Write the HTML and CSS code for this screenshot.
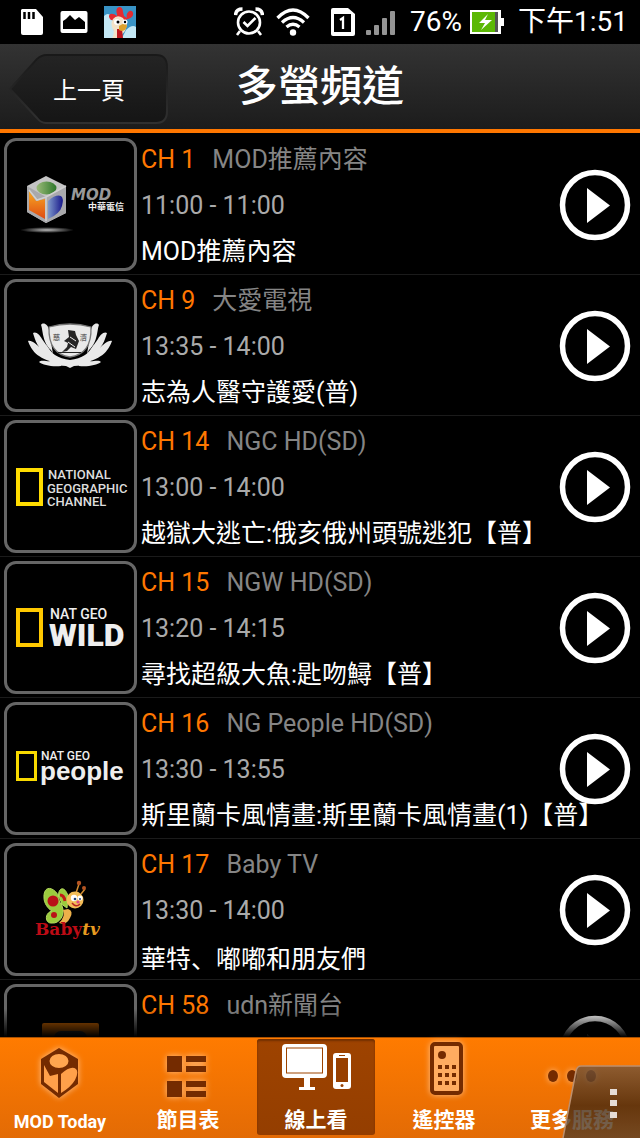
FILE: index.html
```
<!DOCTYPE html>
<html lang="zh-Hant">
<head>
    <meta charset="UTF-8">
    <meta name="viewport" content="width=device-width, initial-scale=1.0">
    <title>多螢頻道</title>
    <link rel="stylesheet" href="styles.css">
</head>
<body>
    <!-- Shared icons -->
    <svg class="defs" aria-hidden="true">
        <symbol id="play" viewBox="0 0 72 72">
            <circle cx="36" cy="36" r="32.5" fill="none" stroke="#fff" stroke-width="5.5"/>
            <path d="M28 19v35l23-17.500z" fill="#fff"/>
        </symbol>
    </svg>

    <!-- Phone status bar -->
    <div class="status-bar">
        <div class="status-left">
            <svg width="24" height="28" viewBox="0 0 24 28"><path d="M2 1h14l7 8v16q0 2-2 2H3q-2 0-2-2V2z" fill="#fff"/><path d="M4.500 4v7M9 4v7M13.500 4v7" stroke="#000" stroke-width="2.500"/></svg>
            <svg width="28" height="24" viewBox="0 0 28 24"><rect x="0.500" y="1" width="27" height="22" rx="2" fill="#fff"/><path d="M3 19V11l3-2 4-4 5 5 4-3 6 5v7z"/></svg>
            <svg width="32" height="32" viewBox="0 0 32 32">
                <rect width="32" height="32" fill="#3993c5"/>
                <path d="M0 10q5-5 8 2l3 20H0zM22 24q6-6 10-3v11H18z" fill="#c4e8f5"/>
                <path d="M13 8C10 0 19-2 19 6l1 4 3 2c-2-6 5-10 6-5 1 4-4 6-6 6l-3 3-13-2C2 9 7 5 13 10z" fill="#e52b30"/>
                <path d="M9 13q4-5 10-1l4 7-2 6-6 7H8q3-5 1-9-3-5 0-10z" fill="#f3e2c8"/>
                <path d="M13 23h5l1 9h-6z" fill="#bd171f"/>
                <path d="M15 20q7-5 8 0-2 7-8 4z" fill="#dda12c"/>
                <circle cx="13" cy="16" r="3" fill="#fff"/><circle cx="21" cy="16" r="2.500" fill="#fff"/>
                <circle cx="14" cy="16" r="1.500"/><circle cx="21" cy="16" r="1.200"/>
            </svg>
        </div>
        <div class="status-right">
            <svg width="30" height="30" viewBox="0 0 30 30" fill="none" stroke="#fff" stroke-width="2.600"><circle cx="15" cy="15.500" r="11"/><path d="M9.500 15l4 4 8-8M6 24l-3 4M24 24l3 4"/><path d="M1.500 8Q2 2 8.500 2M21.500 2Q28 2 28.500 8" stroke-width="3.500"/></svg>
            <svg class="wifi" width="34" height="28" viewBox="0 0 34 28" fill="none" stroke="#fff" stroke-width="3.300"><path d="M1.500 10Q17-6 32.500 10M6 14.500q11-10 22 0M10.500 19q6.500-5.500 13 0"/><circle cx="17" cy="24.500" r="3.200" fill="#fff" stroke="none"/></svg>
            <svg width="26" height="30" viewBox="0 0 26 30"><path d="M3 1h15l7 6v20q0 2-2 2H3q-2 0-2-2V3q0-2 2-2z" fill="#fff"/><path d="M4 7h17v18H4z"/><path d="M10 13l3-2v11" fill="none" stroke="#fff" stroke-width="2.300"/></svg>
            <svg class="signal" width="30" height="28" viewBox="0 0 30 28" fill="#949494"><rect y="22" width="5" height="5" rx="1"/><rect x="8" y="17" width="5" height="10" rx="1"/><rect x="16" y="10" width="5" height="17" rx="1"/><rect x="24" y="3" width="5" height="24" rx="1"/></svg>
            <span class="percent">76%</span>
            <svg width="34" height="24" viewBox="0 0 34 24"><path d="M0 0h31v8h3v8h-3v8H0z" fill="#fff"/><rect x="2" y="2" width="23" height="20" fill="#5cb805"/><rect x="25" y="2" width="3" height="20" fill="#555"/><path d="M18 4L9 13h6l-4 7 11-10h-7z" fill="#fff"/></svg>
            <span class="clock">下午1:51</span>
        </div>
    </div>

    <header>
        <button class="back">
            <svg class="back-shape" viewBox="0 0 160 72" preserveAspectRatio="none" aria-hidden="true">
                <defs>
                    <linearGradient id="backFill" x2="0" y2="1"><stop stop-color="#242424"/><stop offset="1" stop-color="#151515"/></linearGradient>
                    <linearGradient id="backEdge" x2="0" y2="1"><stop stop-color="#191919"/><stop offset="1" stop-color="#303030"/></linearGradient>
                </defs>
                <path d="M1 36L28 6Q33 2 37 2h110q11 0 11 12v44q0 12-11 12H37q-5 0-9-5z" fill="url(#backFill)" stroke="url(#backEdge)" stroke-width="2"/>
            </svg>
            <span>上一頁</span>
        </button>
        <h1>多螢頻道</h1>
    </header>

    <main>
        <ul class="channels">
            <li class="channel">
                <div class="thumb">
                    <svg viewBox="0 0 127 127" role="img" aria-label="MOD">
                        <defs>
                            <linearGradient id="cubeGreen"><stop stop-color="#9bbb78"/><stop offset="1" stop-color="#2d772b"/></linearGradient>
                            <linearGradient id="cubeOrange" x2="0" y2="1"><stop stop-color="#f7a923"/><stop offset="1" stop-color="#df4b12"/></linearGradient>
                            <linearGradient id="cubeBlue"><stop stop-color="#7f9acb"/><stop offset="1" stop-color="#17178b"/></linearGradient>
                            <radialGradient id="cubeShadow"><stop stop-color="#bbb"/><stop offset="1" stop-color="#000"/></radialGradient>
                        </defs>
                        <path d="M39 35l20 10v27L39 82 20 71V45z" fill="#c5c5c5"/>
                        <path d="M20 45l19 11 20-11v27L39 82 20 71z" fill="#a9a9ac"/>
                        <ellipse cx="39.500" cy="47" rx="10" ry="6.500" fill="url(#cubeGreen)"/>
                        <path d="M22 50l7 10 9-2v20L22 69z" fill="url(#cubeOrange)"/>
                        <path d="M41 60q8-7 13-5 3 2 1 10-2 8-14 13z" fill="url(#cubeBlue)"/>
                        <path d="M22 49l8 10 9-3v24M39 56l20-11" fill="none" stroke="#d0d0d0" stroke-width="1.500"/>
                        <ellipse cx="40" cy="89" rx="27" ry="3" fill="url(#cubeShadow)"/>
                        <text class="logo-mod" x="64" y="59">MOD</text>
                        <text class="logo-cht" x="81" y="69">中華電信</text>
                    </svg>
                </div>
                <div class="info">
                    <p class="name"><span class="number">CH 1</span>MOD推薦內容</p>
                    <p class="time">11:00 - 11:00</p>
                    <p class="program">MOD推薦內容</p>
                </div>
                <button class="play" aria-label="播放 CH 1"><svg><use href="#play"/></svg></button>
            </li>

            <li class="channel">
                <div class="thumb">
                    <svg viewBox="0 0 127 127" role="img" aria-label="大愛電視">
                        <defs>
                            <path id="petals" d="M44 68C35 60 36 47 34 43c2-3 7-1 8 5l4 24zM45 75C30 68 28 57 26 51c3-2 7 2 9 6l12 17zM47 80C27 76 23 64 21 59c4-1 9 4 12 7l16 12zM54 84c-9 1-18-1-22-4 2-3 9 0 12-1l12-1z"/>
                        </defs>
                        <g fill="#e9e9e9">
                            <use href="#petals"/>
                            <use href="#petals" transform="translate(126 0) scale(-1 1)"/>
                            <path d="M39 62q6 14 24 16 18-2 24-16l-4 19q-9 3-16 3l-4 2-4-2q-7 0-16-3z"/>
                            <path d="M42 45Q63 39 84 45 85 72 63 75 41 72 42 45z"/>
                        </g>
                        <path d="M42 45Q63 39 84 45 85 72 63 75 41 72 42 45z" fill="none" stroke="#777" stroke-width="1.300"/>
                        <path d="M61 48l7 1 1 4 3 6-3 8-5-2-4 4-5 1 5-5 1-4-4-2 5-4zM51 70h23v1H51z" fill="#252525"/>
                        <path d="M63 55l6 4M61 60l7 5" stroke="#eee"/>
                        <text class="logo-seal" x="46" y="58">慈</text>
                        <text class="logo-seal" x="73" y="58">濟</text>
                    </svg>
                </div>
                <div class="info">
                    <p class="name"><span class="number">CH 9</span>大愛電視</p>
                    <p class="time">13:35 - 14:00</p>
                    <p class="program">志為人醫守護愛(普)</p>
                </div>
                <button class="play" aria-label="播放 CH 9"><svg><use href="#play"/></svg></button>
            </li>

            <li class="channel">
                <div class="thumb">
                    <svg viewBox="0 0 127 127" role="img" aria-label="National Geographic Channel">
                        <rect x="11" y="47" width="23" height="34" fill="none" stroke="#ffdc00" stroke-width="4"/>
                        <text class="logo-ngc" x="41" y="56">NATIONAL</text>
                        <text class="logo-ngc" x="40" y="70">GEOGRAPHIC</text>
                        <text class="logo-ngc" x="40" y="83">CHANNEL</text>
                    </svg>
                </div>
                <div class="info">
                    <p class="name"><span class="number">CH 14</span>NGC HD(SD)</p>
                    <p class="time">13:00 - 14:00</p>
                    <p class="program">越獄大逃亡:俄亥俄州頭號逃犯【普】</p>
                </div>
                <button class="play" aria-label="播放 CH 14"><svg><use href="#play"/></svg></button>
            </li>

            <li class="channel">
                <div class="thumb">
                    <svg viewBox="0 0 127 127" role="img" aria-label="Nat Geo Wild">
                        <rect x="11" y="46" width="23" height="35" fill="none" stroke="#ffc900" stroke-width="4"/>
                        <text class="logo-geo" x="43" y="55">NAT GEO</text>
                        <text class="logo-wild" x="42" y="82">WILD</text>
                    </svg>
                </div>
                <div class="info">
                    <p class="name"><span class="number">CH 15</span>NGW HD(SD)</p>
                    <p class="time">13:20 - 14:15</p>
                    <p class="program">尋找超級大魚:匙吻鱘【普】</p>
                </div>
                <button class="play" aria-label="播放 CH 15"><svg><use href="#play"/></svg></button>
            </li>

            <li class="channel">
                <div class="thumb">
                    <svg viewBox="0 0 127 127" role="img" aria-label="Nat Geo People">
                        <rect x="10.500" y="47.500" width="18" height="27" fill="none" stroke="#f8d900" stroke-width="3"/>
                        <text class="logo-geo small" x="34" y="55">NAT GEO</text>
                        <text class="logo-people" x="33" y="75">people</text>
                    </svg>
                </div>
                <div class="info">
                    <p class="name"><span class="number">CH 16</span>NG People HD(SD)</p>
                    <p class="time">13:30 - 13:55</p>
                    <p class="program">斯里蘭卡風情畫:斯里蘭卡風情畫(1)【普】</p>
                </div>
                <button class="play" aria-label="播放 CH 16"><svg><use href="#play"/></svg></button>
            </li>

            <li class="channel">
                <div class="thumb">
                    <svg viewBox="0 0 127 127" role="img" aria-label="Baby TV">
                        <path d="M53 57C48 43 57 37 61 50l-1 12zM55 60C52 41 36 36 37 52c0 5 4 11 8 13-8 2-7 13 0 12 7 1 14-8 10-17z" fill="#9bcb3d" stroke="#b3d95f"/>
                        <path d="M61 63q6 2 2 9-4 8-11 5 7-7 4-13z" fill="#edb04a"/>
                        <circle cx="46" cy="55" r="5.500" fill="#b91118"/><circle cx="47" cy="69" r="3" fill="#b91118"/>
                        <path d="M53 49q4 0 5 6" fill="none" stroke="#c31b16" stroke-width="3"/>
                        <path d="M69 47l3-9M74 48l4-5" stroke="#d18b2f" stroke-width="1.500"/>
                        <circle cx="72" cy="37" r="2.200" fill="#b45422"/><circle cx="77" cy="42" r="2" fill="#b45422"/>
                        <circle cx="68" cy="54" r="8.500" fill="#f3bd58"/>
                        <circle cx="67" cy="52" r="3.200" fill="#fff"/><circle cx="73" cy="52" r="2.600" fill="#fff"/>
                        <circle cx="68" cy="53" r="1.300" fill="#247"/><circle cx="73" cy="53" r="1" fill="#247"/>
                        <circle cx="71" cy="56" r="1.600" fill="#de4688"/><path d="M65 57q4 5 8 1" fill="none" stroke="#b82222" stroke-width="1.500"/>
                        <text class="logo-baby" x="28" y="89">Baby<tspan class="logo-tv">tv</tspan></text>
                    </svg>
                </div>
                <div class="info">
                    <p class="name"><span class="number">CH 17</span>Baby TV</p>
                    <p class="time">13:30 - 14:00</p>
                    <p class="program">華特<span class="comma" lang="zh-Hans">、</span>嘟嘟和朋友們</p>
                </div>
                <button class="play" aria-label="播放 CH 17"><svg><use href="#play"/></svg></button>
            </li>

            <li class="channel">
                <div class="thumb">
                    <svg viewBox="0 0 127 127" role="img" aria-label="udn">
                        <rect x="35" y="36" width="57" height="55" rx="2" fill="#c86300"/>
                        <rect x="47" y="44" width="33" height="38" rx="7" fill="#333"/>
                    </svg>
                </div>
                <div class="info">
                    <p class="name"><span class="number">CH 58</span>udn新聞台</p>
                </div>
                <button class="play" aria-label="播放 CH 58"><svg><use href="#play"/></svg></button>
            </li>
        </ul>
    </main>

    <!-- Bottom tabs -->
    <nav class="tabs">
        <a href="#" class="tab">
            <svg class="glow" viewBox="0 0 72 60">
                <path d="M35 5l19 11v25L35 55 17 41V16z" fill="#742b00"/>
                <ellipse cx="35" cy="18" rx="9.500" ry="7" fill="#ffa64f"/>
                <path d="M20 22l6 11 8-2v19L20 39zM37 31q10-9 15-5 3 3-1 11-4 7-14 13z" fill="#ffa04a"/>
            </svg>
            <span class="latin">MOD Today</span>
        </a>
        <a href="#" class="tab">
            <svg class="glow" viewBox="0 0 72 60" fill="#742b00">
                <path d="M15 13h15v16H15zM34 13h20v6H34zM34 23h20v6H34zM15 38h15v16H15zM34 38h20v6H34zM34 48h20v6H34z"/>
            </svg>
            <span>節目表</span>
        </a>
        <a href="#" class="tab active">
            <svg viewBox="0 0 72 60">
                <path d="M6 1h37q4 0 4 4v26q0 4-4 4H30v9h5v3H19v-3h5v-9H6q-4 0-4-4V5q0-4 4-4z" fill="#fff"/>
                <rect x="6.500" y="5" width="36" height="25" fill="none" stroke="#9d4400"/>
                <rect x="53" y="10" width="18" height="36" rx="3" fill="#fff"/>
                <path d="M56 15h12v24H56zM59 12h6v1h-6z" fill="#984000"/><circle cx="62" cy="42.500" r="1.500" fill="#984000"/>
            </svg>
            <span>線上看</span>
        </a>
        <a href="#" class="tab">
            <svg class="glow" viewBox="0 0 72 60">
                <rect x="24" y="1" width="29" height="49" rx="3" fill="#ffac60" stroke="#742b00" stroke-width="4"/>
                <circle cx="34" cy="12" r="4" fill="#742b00"/>
                <path d="M30 22h4v4h-4zM37 22h4v4h-4zM44 22h4v4h-4zM30 30h4v4h-4zM37 30h4v4h-4zM44 30h4v4h-4zM30 38h4v4h-4zM37 38h4v4h-4zM44 38h4v4h-4z" fill="#742b00"/>
            </svg>
            <span>遙控器</span>
        </a>
        <a href="#" class="tab">
            <svg class="glow" viewBox="0 0 72 60" fill="#742b00"><ellipse cx="17" cy="33" rx="5" ry="6"/><ellipse cx="36" cy="33" rx="5" ry="6"/><ellipse cx="55" cy="33" rx="5" ry="6"/></svg>
            <span>更多服務</span>
        </a>
        <button class="overflow" aria-label="選單">
            <svg viewBox="0 0 78 73">
                <defs><linearGradient id="menuFill" x2="0" y2="1"><stop stop-color="#74553b"/><stop offset=".55" stop-color="#45280f"/><stop offset="1" stop-color="#5a4027"/></linearGradient></defs>
                <path d="M1 73L14 6q1-5 5-5h59v72z" fill="url(#menuFill)" fill-opacity=".8"/>
                <path d="M1 73L14 6q1-5 5-5h59" fill="none" stroke="#bd8f6d" stroke-width="1.500"/>
                <path d="M48 24h7v6h-7zM48 35h7v6h-7zM48 47h7v6h-7z" fill="#e5dcd6"/>
            </svg>
        </button>
    </nav>
</body>
</html>
```
FILE: styles.css
```
/* Reset some default styles */
* {
    box-sizing: border-box;
}

body, h1, p, ul, button {
    margin: 0;
    padding: 0;
}

button {
    border: none;
    background: none;
    color: inherit;
    font-family: inherit;
    cursor: pointer;
}

svg {
    display: block;
    flex-shrink: 0;
}

body {
    display: flex;
    flex-direction: column;
    height: 100vh;
    overflow: hidden;
    background: #000;
    color: #fff;
    font-family: Roboto, "Noto Sans CJK TC", sans-serif;
}

.defs {
    position: absolute;
    width: 0;
    height: 0;
}

/* Status bar */
.status-bar {
    display: flex;
    justify-content: space-between;
    align-items: center;
    height: 44px;
    padding: 0 12px 0 20px;
    font-size: 28px;
    line-height: 44px;
}

.status-left, .status-right {
    display: flex;
    align-items: center;
}

.status-left {
    gap: 16px;
}

.wifi {
    margin: 0 20px 0 12px;
}

.signal {
    margin: 0 14px 0 10px;
}

.percent {
    margin-right: 8px;
}

.clock {
    margin-left: 14px;
}

/* Header */
header {
    display: grid;
    grid-template-columns: 1fr auto 1fr;
    align-items: center;
    flex-shrink: 0;
    height: 89px;
    padding-top: 4px;
    background: linear-gradient(#333, #1c1c1c);
    border-bottom: 4px solid #ff7700;
}

.back {
    display: grid;
    align-items: center;
    width: 160px;
    margin-left: 9px;
    font-size: 24px;
}

.back > * {
    grid-area: 1 / 1;
}

.back-shape {
    width: 100%;
    height: 72px;
}

h1 {
    font-size: 42px;
    font-weight: 500;
    line-height: 76px;
    padding-bottom: 4px;
}

/* Channel list */
main {
    position: relative;
    flex: 1;
    min-height: 0;
    padding-top: 1px;
    overflow: hidden;
}

main::after {
    content: "";
    position: absolute;
    left: 0;
    right: 0;
    bottom: 0;
    height: 28px;
    background: linear-gradient(transparent, #000);
}

.channels {
    list-style: none;
}

.channel {
    display: flex;
    align-items: flex-start;
    height: 141px;
    padding: 4px 9px 0 4px;
    border-bottom: 1px solid #1b1b1b;
}

.thumb {
    flex-shrink: 0;
    width: 133px;
    height: 133px;
    border: 3px solid #666;
    border-radius: 12px;
}

.info {
    flex: 1;
    min-width: 0;
    margin: -1px 0 0 4px;
    font-size: 25px;
    line-height: 46px;
    white-space: nowrap;
}

.number {
    margin-right: 17px;
    color: #ff7700;
}

.name {
    color: #858585;
}

.time {
    color: #aaa;
}

.comma {
    font-family: "Noto Sans CJK SC", sans-serif;
}

.play {
    margin-top: 31px;
}

.play svg {
    width: 72px;
    height: 72px;
}

/* Channel logos */
.thumb text {
    fill: #eee;
    font-weight: 700;
}

.thumb .logo-mod {
    fill: #999;
    font: italic 700 15px "DejaVu Sans", sans-serif;
}

.thumb .logo-cht {
    font-size: 9px;
}

.thumb .logo-seal {
    fill: #666;
    font-size: 7px;
}

.thumb .logo-ngc {
    fill: #ddd;
    font: 500 13px Roboto, sans-serif;
}

.thumb .logo-geo {
    font: 500 14px Roboto, sans-serif;
}

.thumb .logo-geo.small {
    font-size: 12px;
}

.thumb .logo-wild {
    font: 900 32px Roboto, sans-serif;
}

.thumb .logo-people {
    font: 700 26px "Liberation Sans", sans-serif;
}

.thumb .logo-baby {
    fill: #bd0b15;
    font: 700 17px "DejaVu Serif", serif;
}

.thumb .logo-tv {
    fill: #e79b20;
    font-style: italic;
}

/* Bottom tabs */
.tabs {
    position: relative;
    display: flex;
    flex-shrink: 0;
    gap: 10px;
    height: 101px;
    padding: 1px 9px 3px 1px;
    background: linear-gradient(#ff7b00, #e36b05);
    border-top: 1px solid #a95000;
}

.tab {
    display: flex;
    flex: 1;
    flex-direction: column;
    align-items: center;
    padding-top: 4px;
    border-radius: 3px;
    color: #fff;
    font-size: 21px;
    font-weight: 700;
    line-height: 34px;
    text-decoration: none;
    white-space: nowrap;
}

.tab svg {
    width: 72px;
    height: 60px;
    overflow: visible;
}

.tab .latin {
    font-size: 18px;
    line-height: 38px;
}

.tab.active {
    background: linear-gradient(#9e4300, #943e00);
    box-shadow: inset 0 2px 2px #733000;
}

.glow {
    filter: drop-shadow(0 0 3px #ffc28a);
}

.overflow {
    position: absolute;
    right: 0;
    bottom: 0;
}

.overflow svg {
    width: 78px;
    height: 73px;
}
```
